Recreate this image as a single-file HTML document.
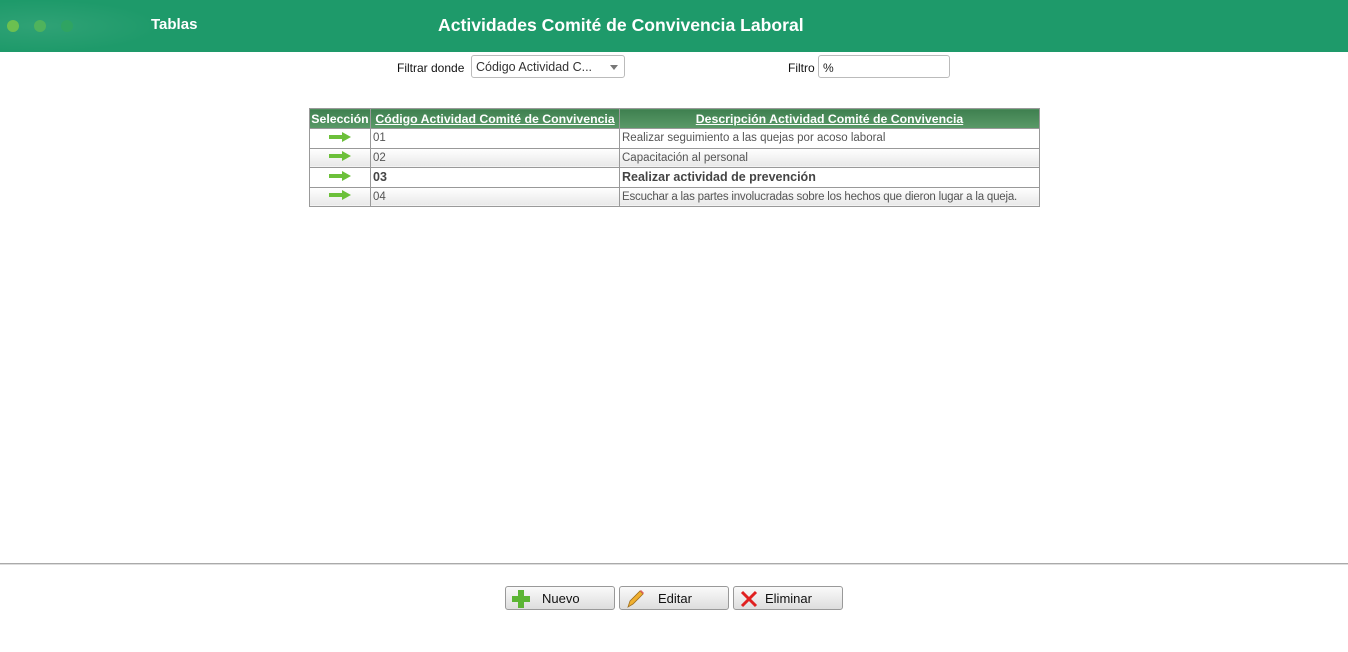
<!DOCTYPE html>
<html><head><meta charset="utf-8"><style>
*{margin:0;padding:0;box-sizing:border-box}
body{width:1348px;height:652px;background:#fff;font-family:"Liberation Sans",sans-serif;position:relative;overflow:hidden}
.hdr{position:absolute;left:0;top:0;width:1348px;height:52px;background:#1e9a6a}
.glow{position:absolute;left:0;top:0;width:160px;height:52px;background:radial-gradient(ellipse at 40px 26px,rgba(255,255,255,.08),rgba(255,255,255,0) 120px)}
.dot{position:absolute;top:20px;width:12px;height:12px;border-radius:50%}
.t1{position:absolute;left:151px;top:16px;color:#fff;font-weight:bold;font-size:15px}
.t2{position:absolute;left:438px;top:15px;color:#fff;font-weight:bold;font-size:17.6px}
.lbl{position:absolute;font-size:12px;color:#111}
.sel{position:absolute;left:471px;top:55px;width:154px;height:23px;border:1px solid #bbb;border-radius:3px;font-size:12.5px;color:#333;padding:4px 0 0 4px}
.sel:after{content:"";position:absolute;right:6px;top:9px;border:4px solid transparent;border-top:5px solid #777}
.inp{position:absolute;left:818px;top:55px;width:132px;height:23px;border:1px solid #bbb;border-radius:3px;font-size:12px;padding:5px 0 0 4px;color:#222}
table{position:absolute;left:309px;top:108px;width:730px;table-layout:fixed;border-collapse:collapse;font-size:11.5px;color:#555}
td,th{border:1px solid #999;height:19.5px;padding:0 2px;white-space:nowrap;overflow:hidden}
th{background:linear-gradient(#3f8050,#5a9a68);color:#fff;font-weight:bold;text-decoration:underline;height:20px;font-size:12.3px}
th:first-child{text-decoration:none}
tr.g td{background:linear-gradient(#fff,#e8e8e8)}
tr.b td{font-weight:bold;font-size:12.5px;color:#444}
.ar{text-align:center}
.line{position:absolute;left:0;top:563px;width:1348px;height:2px;border-top:1px solid #aaa;border-bottom:1px solid #ddd}
.btn{position:absolute;top:586px;width:110px;height:24px;border:1px solid #999;border-radius:3px;background:linear-gradient(#fafafa,#ddd);font-size:13px;color:#111}
.btn span{position:absolute;top:4px}
.btn svg{position:absolute;left:5px;top:2px}
</style></head><body>
<div class="hdr"><div class="glow"></div>
<div class="dot" style="left:7px;background:#6cc050"></div>
<div class="dot" style="left:34px;background:#4fb35c"></div>
<div class="dot" style="left:61px;background:#2fa462"></div>
<div class="t1">Tablas</div><div class="t2">Actividades Comité de Convivencia Laboral</div></div>
<div class="lbl" style="left:397px;top:61px">Filtrar donde</div>
<div class="sel">Código Actividad C...</div>
<div class="lbl" style="left:788px;top:61px">Filtro</div>
<div class="inp">%</div>
<table>
<colgroup><col style="width:61px"><col style="width:249px"><col style="width:420px"></colgroup>
<tr><th style="text-align:center;padding:0">Selección</th><th>Código Actividad Comité de Convivencia</th><th>Descripción Actividad Comité de Convivencia</th></tr>
<tr><td class="ar"><svg width="24" height="12"><path d="M1 4h13V1l9 5-9 5V8H1z" fill="#6cc03a"/></svg></td><td>01</td><td>Realizar seguimiento a las quejas por acoso laboral</td></tr>
<tr class="g"><td class="ar"><svg width="24" height="12"><path d="M1 4h13V1l9 5-9 5V8H1z" fill="#6cc03a"/></svg></td><td>02</td><td>Capacitación al personal</td></tr>
<tr class="b"><td class="ar"><svg width="24" height="12"><path d="M1 4h13V1l9 5-9 5V8H1z" fill="#6cc03a"/></svg></td><td>03</td><td>Realizar actividad de prevención</td></tr>
<tr class="g"><td class="ar"><svg width="24" height="12"><path d="M1 4h13V1l9 5-9 5V8H1z" fill="#6cc03a"/></svg></td><td>04</td><td style="letter-spacing:-0.2px">Escuchar a las partes involucradas sobre los hechos que dieron lugar a la queja.</td></tr>
</table>
<div class="line"></div>
<div class="btn" style="left:505px"><svg width="20" height="20"><path d="M7 1h6v6h6v6h-6v6H7v-6H1V7h6z" fill="#5cb534"/></svg><span style="left:36px">Nuevo</span></div>
<div class="btn" style="left:619px"><svg width="20" height="20"><path d="M3 18l2-6L15 2l3 3L8 15z" fill="#f0b030" stroke="#a07020" stroke-width=".8"/><path d="M15 2l3 3 1-1-3-3z" fill="#e06060"/></svg><span style="left:38px">Editar</span></div>
<div class="btn" style="left:733px"><svg width="20" height="20"><path d="M3 3l14 14M17 3L3 17" stroke="#e02020" stroke-width="3"/></svg><span style="left:31px">Eliminar</span></div>
</body></html>
